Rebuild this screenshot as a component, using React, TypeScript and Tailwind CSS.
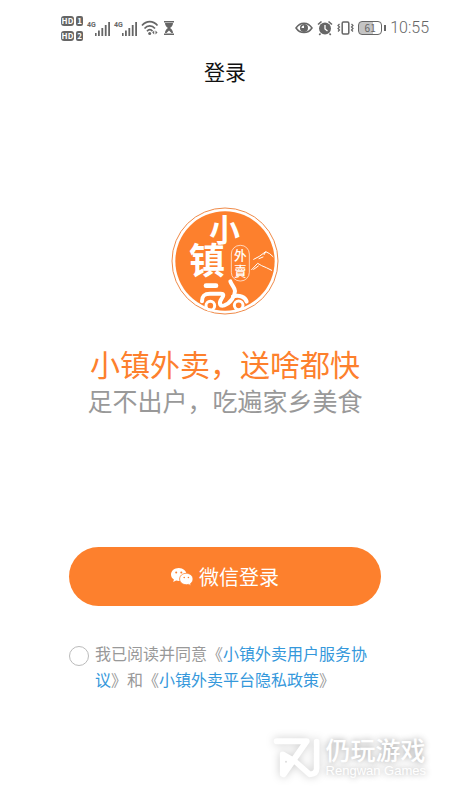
import type { ReactNode } from "react";

function HdBadge({ slot }: { slot: string }) {
  return (
    <div className="flex h-3 items-center gap-0.5 text-[8px] leading-none font-bold text-white">
      <span className="flex h-[10px] w-[13px] items-center justify-center rounded-[3px] bg-[#666]">HD</span>
      <span className="flex h-[10px] w-[7px] items-center justify-center rounded-[2px] bg-[#666]">{slot}</span>
    </div>
  );
}

function Signal() {
  return (
    <div className="flex items-start">
      <span className="w-2 font-['Roboto',sans-serif] text-[7px] leading-2 font-bold">4G</span>
      <svg className="mt-px" width="15" height="14" viewBox="0 0 15 14" fill="currentColor" aria-hidden="true">
        <rect x="0" y="11" width="1.6" height="3" />
        <rect x="3" y="8.5" width="1.8" height="5.5" />
        <rect x="6.4" y="6" width="1.8" height="8" />
        <rect x="9.8" y="3" width="1.8" height="11" />
        <rect x="13.2" y="0" width="1.8" height="14" />
      </svg>
    </div>
  );
}

function StatusBar() {
  return (
    <header className="flex h-14 items-center justify-between pr-[21px] pl-[61px] text-[#666]">
      <div className="flex items-center gap-1">
        <div className="flex flex-col gap-[3px]">
          <HdBadge slot="1" />
          <HdBadge slot="2" />
        </div>
        <Signal />
        <Signal />
        <svg width="18" height="16" viewBox="0 0 18 16" fill="none" stroke="currentColor" strokeWidth="1.7" aria-hidden="true">
          <path d="M1 5.500C5.500.300 12 .300 16.500 5.500M3.500 8.500c3-3.600 7.500-3.600 10.500 0M6 11.200c1.700-2 4-2 5.500 0" />
          <circle cx="8.700" cy="13.500" r="1.500" fill="currentColor" stroke="none" />
          <path d="M13.200 10.500v4l-2-2zM14.500 10.500v4l2-2z" fill="currentColor" stroke="none" />
        </svg>
        <svg width="12" height="14" viewBox="0 0 12 14" fill="currentColor" aria-hidden="true">
          <path d="M1 0h10v1.500H1zM1 12.500h10V14H1zM2 2h8c0 2.500-1.500 4-3 5 1.500 1 3 2.500 3 5H8.500L6 9.500 3.500 12H2c0-2.500 1.500-4 3-5-1.500-1-3-2.500-3-5z" />
        </svg>
      </div>
      <div className="flex items-center gap-1">
        <svg width="18" height="14" viewBox="0 0 18 14" aria-hidden="true">
          <path d="M1 7c4-6.500 12-6.500 16 0-4 6-12 6-16 0z" fill="none" stroke="currentColor" strokeWidth="1.500" />
          <circle cx="9" cy="7" r="4" fill="currentColor" />
          <path d="M9 7V4.500A2.500 2.500 0 0 0 6.500 7z" fill="#fff" />
        </svg>
        <svg width="16" height="16" viewBox="0 0 16 16" fill="none" aria-hidden="true">
          <circle cx="8" cy="8.500" r="6" fill="currentColor" />
          <path d="M1 4.500 4.500 1.500M15 4.500 11.500 1.500M3.500 13.500 2.300 15M12.500 13.500l1.200 1.500" stroke="currentColor" strokeWidth="1.600" />
          <path d="M8 5v4l2.500 2" stroke="#fff" strokeWidth="1.300" />
        </svg>
        <svg width="17" height="14" viewBox="0 0 17 14" fill="none" stroke="currentColor" strokeWidth="1.500" aria-hidden="true">
          <rect x="5.200" y="1" width="6.600" height="12" rx="1.200" />
          <path d="M2.500 3 1 4.500 2.500 6 1 7.500 2.500 9 1 10.500M14.500 3 16 4.500 14.500 6 16 7.500 14.500 9 16 10.500" strokeWidth="1.200" />
        </svg>
        <div className="flex items-center gap-0.5">
          <div className="flex h-[14px] w-6 items-center justify-center rounded-[4px] border border-[#666] bg-linear-to-r from-[#c4c4c4] from-62% to-white to-62% text-[10px] leading-none">61</div>
          <div className="h-1.5 w-0.5 bg-[#666]" />
        </div>
        <time className="font-['Roboto',sans-serif] text-[16px] leading-5 font-light">10:55</time>
      </div>
    </header>
  );
}

function Logo() {
  return (
    <svg className="mx-auto block" width="108" height="108" viewBox="34 23 324 324" role="img" aria-label="小镇外卖" fontFamily="'Noto Sans CJK SC',sans-serif">
      <circle cx="196" cy="185" r="159" fill="#fff" stroke="#f08a48" strokeWidth="3" />
      <circle cx="196" cy="185" r="149" fill="#fd802d" />
      <g fill="#fff" fontWeight="700">
        <text x="149" y="126" fontSize="92">小</text>
        <text x="88" y="224" fontSize="108">镇</text>
        <g fontWeight="500">
          <text x="223" y="182" fontSize="38">外</text>
          <text x="223" y="230" fontSize="38">賣</text>
        </g>
      </g>
      <rect x="215" y="138" width="54" height="107" rx="26" fill="none" stroke="#fff" strokeWidth="2" />
      <g fill="none" stroke="#fff" strokeWidth="3" strokeLinecap="round" strokeLinejoin="round">
        <path d="M282 180 299 171 318 157 330 163 340 172M298 178l12-5M318 158l-5 8" />
        <path d="M276 211 294 192 306 199 320 205 336 213M282 210l14-10" />
      </g>
      <g fill="none" stroke="#fff" strokeWidth="12" strokeLinecap="round" strokeLinejoin="round">
        <path d="M139 259h30" strokeWidth="14" />
        <path d="M127 306c0-18 8-23 24-23h32c11 0 9 7 3 15-10 15-5 24 8 20 18-6 32-27 32-43 0-10-10-17-14-29" />
        <path d="M220 291c20-5 37 2 41 16" />
        <circle cx="152" cy="319" r="13" strokeWidth="9" />
        <circle cx="237" cy="318" r="13" strokeWidth="9" />
      </g>
    </svg>
  );
}

function WeChatIcon() {
  return (
    <svg width="22" height="18" viewBox="0 0 22 18" aria-hidden="true">
      <path d="M7.800 0C3.500 0 0 2.800 0 6.500c0 2.100 1.100 3.900 2.900 5.100L2.200 14l2.900-1.500c.9.300 1.800.4 2.700.4 4.300 0 7.800-2.900 7.800-6.400S12.100 0 7.800 0z" fill="#fff" />
      <path d="M15.300 5.300c-3.700 0-6.700 2.500-6.700 5.700s3 5.700 6.700 5.700c.8 0 1.600-.1 2.300-.3l2.500 1.300-.6-2.100c1.500-1.100 2.500-2.700 2.500-4.600 0-3.200-3-5.700-6.700-5.700z" fill="#fff" stroke="#fd802d" strokeWidth=".8" />
      <g fill="#fd802d">
        <circle cx="5.200" cy="4.500" r="1" />
        <circle cx="10.300" cy="4.500" r="1" />
        <circle cx="13.200" cy="9.500" r=".8" />
        <circle cx="17.400" cy="9.500" r=".8" />
      </g>
    </svg>
  );
}

function PolicyLink({ children }: { children: ReactNode }) {
  return <a href="#" className="text-[#3598db]">{children}</a>;
}

function Watermark() {
  return (
    <footer className="flex items-center justify-end gap-1.5 pr-6 text-white">
      <svg className="overflow-visible drop-shadow-[0_0_4px_#ccc]" width="46" height="40" viewBox="43 39 138 120" fill="none" stroke="#fff" strokeWidth="18" strokeLinejoin="round" strokeLinecap="round" aria-hidden="true">
        <path d="M51 49H141L72 148" />
        <path d="M69 146V88L105 108 150 148Q171 148 171 130V50" strokeWidth="17" />
        <path d="M69 88 105 108 69 146z" fill="#fff" strokeWidth="10" />
        <circle cx="79" cy="110" r="3" fill="#ddd" stroke="none" />
      </svg>
      <div className="text-shadow-[0_0_6px_#999]">
        <p className="text-[25px] leading-[26px] font-medium">仍玩游戏</p>
        <p className="font-['Liberation_Sans',sans-serif] text-[13px] leading-[18px]">Rengwan Games</p>
      </div>
    </footer>
  );
}

export default function App() {
  return (
    <div className="flex min-h-screen flex-col bg-white font-['Noto_Sans_CJK_SC',sans-serif]">
      <StatusBar />
      <h1 className="text-center text-[21px] leading-[30px] text-[#111]">登录</h1>
      <main className="pt-[121px]">
        <Logo />
        <div className="mt-[30px] text-center">
          <h2 className="text-[30px] leading-9 text-[#fd802d]">小镇外卖，送啥都快</h2>
          <p className="text-[25px] leading-[38px] text-[#999]">足不出户，吃遍家乡美食</p>
        </div>
        <form className="mx-[69px] mt-32">
          <button type="button" className="flex h-[59px] w-full items-center justify-center gap-1.5 rounded-full bg-[#fd802d] text-[20px] text-white">
            <WeChatIcon />
            微信登录
          </button>
          <div className="mt-[34px] flex items-start gap-1.5">
            <input id="agree" type="checkbox" className="mt-1.5 size-5 shrink-0 appearance-none rounded-full border border-[#bbb] checked:bg-[#fd802d]" />
            <label htmlFor="agree" className="text-[16px] leading-[26px] text-[#999]">
              我已阅读并同意《<PolicyLink>小镇外卖用户服务协议</PolicyLink>》和《<PolicyLink>小镇外卖平台隐私政策</PolicyLink>》
            </label>
          </div>
        </form>
      </main>
      <div className="mt-auto pb-5">
        <Watermark />
      </div>
    </div>
  );
}
